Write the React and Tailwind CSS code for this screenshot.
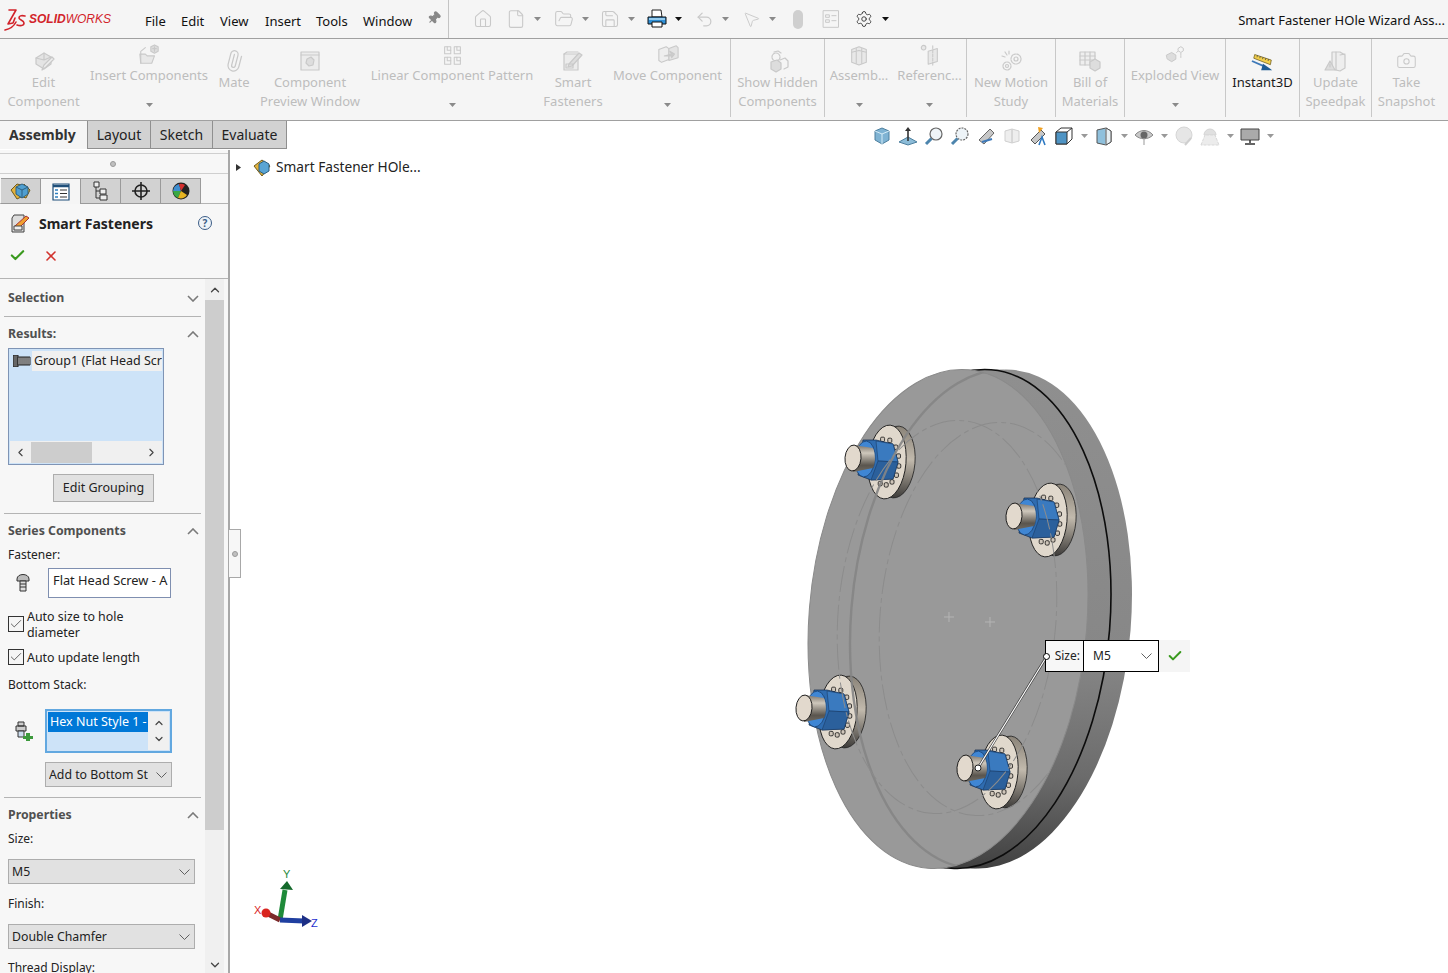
import React from "react";
import { House, File, FolderOpen, Save, Undo2, MousePointer2, Settings, Pin, Camera, Paperclip, ChevronDown, ChevronUp, ChevronLeft, ChevronRight, Check, X } from "lucide-react";

const G = "#c9c9c9";
const Ico = ({ children, s = 24, c = G }) => (
  <svg width={s} height={s} viewBox="0 0 24 24" fill="none" stroke={c} strokeWidth="1.2" strokeLinejoin="round" strokeLinecap="round">{children}</svg>
);
const Caret = ({ c = "#555" }) => (
  <svg width="7" height="4" viewBox="0 0 7 4"><path d="M0 0h7L3.5 4z" fill={c} /></svg>
);

const IEdit = () => <Ico><path d="M4 9l8-5 7 4v7l-7 5-8-5z" fill="#e4e4e4"/><path d="M12 4v7M4 9l8 2 7-3"/><path d="M10 21l2-5 8-8 2 2-8 8z" fill="#eee"/></Ico>;
const IInsert = () => <Ico s={22}><path d="M2 11h6l2 2h8l-3 8H3z" fill="#e8e8e8"/><path d="M3 21V8l5-4"/><path d="M14 3l4-2 4 2v5l-4 2-4-2z" fill="#ddd"/><path d="M18 3v5M16 5h4"/></Ico>;
const IPreview = () => <Ico s={24}><rect x="3" y="3" width="18" height="18" fill="#ececec"/><path d="M3 6h18"/><path d="M9 10l4-2 3 3-1 5-4 1-3-3z" fill="#ddd"/></Ico>;
const ILinear = () => <Ico s={21}><rect x="3" y="2" width="7" height="8" /><rect x="14" y="2" width="7" height="8"/><rect x="3" y="14" width="7" height="8"/><rect x="14" y="14" width="7" height="8"/><path d="M6 2v4h4M17 2v4h4M6 14v4h4M17 14v4h4"/></Ico>;
const ISmart = () => <Ico s={24}><path d="M3 5h14v16H3z" fill="#ececec"/><path d="M3 5l3-2h11"/><path d="M8 15l10-11 3 2-10 11-4 1z" fill="#ddd"/><path d="M5 15h7v4H5z"/></Ico>;
const IMove = () => <Ico s={22}><path d="M2 6l8-3 3 2v12l-8 3-3-2z" fill="#eee"/><path d="M13 5l8-3 2 2v11l-10 3z" fill="#e4e4e4"/><path d="M8 13l8-2-2-3 5 3-3 4v-2z" fill="#ccc"/></Ico>;
const IHidden = () => <Ico s={24}><circle cx="10" cy="8" r="4" strokeDasharray="2 1"/><path d="M5 13l6-2 4 3v6l-5 3-5-3z" fill="#ddd"/><path d="M14 11l5-2 3 3v6l-4 2"/><path d="M8 3l4-1 3 2"/></Ico>;
const IAssemb = () => <Ico s={22}><path d="M4 6l8-3 8 3v14l-8 3-8-3z" fill="#e8e8e8"/><path d="M9 5v16M15 5v16M4 9l8-2 8 2"/></Ico>;
const IRef = () => <Ico s={22}><circle cx="5" cy="4" r="2.5" fill="#e8e8e8"/><path d="M10 8l10-3v14l-10 3z" fill="#e8e8e8"/><path d="M15 2v21" strokeDasharray="3 1.5"/></Ico>;
const IMotion = () => <Ico s={24}><circle cx="8" cy="17" r="4" strokeDasharray="2 1"/><circle cx="17" cy="10" r="5" strokeDasharray="2 1"/><circle cx="17" cy="10" r="2"/><circle cx="8" cy="17" r="1.5"/><path d="M6 3l2 3M3 7l3 1M10 2v3"/></Ico>;
const IBom = () => <Ico s={24}><rect x="2" y="3" width="15" height="13" fill="#eee"/><path d="M2 7h15M2 11h15M7 3v13M12 3v13"/><path d="M12 13l5-3 5 3v6l-5 3-5-3z" fill="#ddd"/></Ico>;
const IExploded = () => <Ico s={20}><path d="M2 12l6-3 5 3v5l-5 3-5-3z" fill="#ddd"/><path d="M16 4l3-2 3 2v3l-3 2-3-2z"/><path d="M19 10v6M14 9l2-2" strokeDasharray="2 1"/></Ico>;
const IInstant = () => (
  <svg width="24" height="24" viewBox="0 0 26 26"><path d="M4 6l18 6-1 5L3 10z" fill="#f2cf4a" stroke="#6a5a20" strokeWidth=".8"/><path d="M7 7l-.5 2M10 8l-.5 2M13 9l-.5 2M16 10l-.5 2M19 11l-.5 2" stroke="#444" strokeWidth=".8"/><path d="M1 13l14 6" stroke="#3e79b8" strokeWidth="2"/><path d="M13 16l10 7H11z" fill="#1f5c94"/></svg>
);
const ISpeed = () => <Ico s={24}><path d="M8 3h8l5 3v13l-5 3-8-2z" fill="#eee"/><path d="M12 3v18M16 6l5-1"/><path d="M6 12l5 9H1z" fill="#ddd"/><path d="M6 15v3"/></Ico>;

const Item = ({ w, lines, I, caret, one, active }) => (
  <div className={`${w} shrink-0 h-[81px] flex flex-col items-center ${active ? "text-[#1a1a1a]" : "text-[#bdbdbd]"} whitespace-nowrap`}>
    {one ? (
      <>
        <div className="mt-[6px] h-[20px] flex items-center justify-center"><I /></div>
        <div className="mt-[1px] leading-[19px]">{lines[0]}</div>
        {caret && <div className="mt-[18px]"><Caret c="#8a8a8a" /></div>}
      </>
    ) : (
      <>
        <div className="mt-[9px] h-[25px] flex items-center justify-center"><I /></div>
        {lines.map((l) => <div key={l} className="leading-[19px]">{l}</div>)}
      </>
    )}
  </div>
);
const Sep = () => <div className="w-px h-[78px] bg-[#c8c8c8] shrink-0" />;

const Logo = () => (
  <div className="flex items-center w-[145px] pl-[4px] shrink-0">
    <svg width="24" height="24" viewBox="0 0 24 24" fill="none" stroke="#d2232a" strokeWidth="1.6" strokeLinecap="round" strokeLinejoin="round">
      <path d="M5 3h7l-8 14 5-1 2-5" />
      <path d="M1 23c5-1 9-4 11-8" />
      <path d="M21 9c-4-1-6 0-6 2s5 2 5 5-4 3-7 2" />
    </svg>
    <div className="ml-[1px] text-[12px] italic text-[#d2232a] leading-none font-['Liberation_Sans',sans-serif]"><span className="font-bold">SOLID</span><span>WORKS</span></div>
  </div>
);

const TbBtn = ({ children, caret, dark }) => (
  <>
    <div className="w-[28px] shrink-0 flex justify-center items-center">{children}</div>
    {caret && <div className="w-[19px] shrink-0 pl-[4px] flex items-center"><Caret c={dark ? "#111" : "#8a8a8a"} /></div>}
  </>
);

const Printer = () => (
  <svg width="20" height="20" viewBox="0 0 20 20"><path d="M5 1h9l1 7H5z" fill="#fff" stroke="#222"/><path d="M1 8h18v7H1z" fill="#2e8fd6" stroke="#111"/><path d="M2 10h16" stroke="#b9e0f7" strokeWidth="1.5"/><path d="M5 13h10v5H5z" fill="#fff" stroke="#111"/></svg>
);

const Chev = ({ up }) => (
  <svg width="12" height="7" viewBox="0 0 12 7" fill="none" stroke="#7a7a7a" strokeWidth="1.6">{up ? <path d="M1 6l5-5 5 5" /> : <path d="M1 1l5 5 5-5" />}</svg>
);
const SmallDown = () => (
  <svg width="11" height="6" viewBox="0 0 11 6" fill="none" stroke="#606060" strokeWidth="1"><path d="M.5.5l5 5 5-5" /></svg>
);

const HCube = () => <svg width="18" height="18" viewBox="0 0 18 18"><path d="M9 1l7 3v9l-7 4-7-4V4z" fill="#7fb3d3" stroke="#4d7f9e"/><path d="M2 4l7 3 7-3M9 7v10" stroke="#d5ecf7" fill="none"/></svg>;
const HNormal = () => <svg width="20" height="20" viewBox="0 0 20 20"><path d="M1 16l9-5 9 5-9 3z" fill="#8cbcd8" stroke="#4d7f9e"/><path d="M10 15V3" stroke="#333" strokeWidth="1.6"/><path d="M7 5l3-4 3 4z" fill="#333"/></svg>;
const HZoom = ({ dash }) => <svg width="20" height="20" viewBox="0 0 20 20" fill="none"><circle cx="12" cy="8" r="6" fill="#eef4f8" stroke="#666" strokeWidth="1.2" strokeDasharray={dash ? "2 1" : "0"}/><path d="M7.5 12.5L2 18" stroke="#4d85ad" strokeWidth="3"/></svg>;
const HPrev = () => <svg width="20" height="20" viewBox="0 0 20 20"><path d="M3 14L14 3l4 4L8 18z" fill="#c7c7c7" stroke="#666"/><path d="M6 16l10-3" stroke="#3e79b8" strokeWidth="2"/></svg>;
const HSect = () => <svg width="20" height="20" viewBox="0 0 20 20" fill="#eee" stroke="#d0d0d0"><path d="M3 5l7-2v14l-7-2zM10 3l7 2v10l-7 2z"/></svg>;
const HDyn = () => <svg width="20" height="20" viewBox="0 0 20 20"><path d="M3 14L13 4l4 4L7 18z" fill="#c7c7c7" stroke="#555"/><path d="M10 1l5 1-4 5z" fill="#f0a020"/><path d="M11 19l3-8 3 8" stroke="#2e79c2" strokeWidth="1.6" fill="none"/></svg>;
const HBox = () => <svg width="20" height="20" viewBox="0 0 20 20"><path d="M2 6l5-4h11v11l-5 5H2z" fill="#fff" stroke="#333"/><path d="M2 6h11v12H2z" fill="#4f94c4" stroke="#333"/><path d="M13 6l5-4" stroke="#333"/></svg>;
const HCyl = () => <svg width="20" height="20" viewBox="0 0 20 20"><path d="M3 4l9-2 5 3v11l-5 3-9-2z" fill="#8fc0dc" stroke="#555"/><path d="M12 2v17" stroke="#eee"/><path d="M12 2l5 3v11l-5 3z" fill="#e6eef2" stroke="#555"/></svg>;
const HEye = () => <svg width="20" height="20" viewBox="0 0 20 20"><path d="M1 9c5-6 13-6 18 0-5 5-13 5-18 0z" fill="#c8c8c8" stroke="#888"/><circle cx="10" cy="9" r="3.5" fill="#666"/><path d="M10 12v7" stroke="#999"/></svg>;
const HBall = () => <svg width="20" height="20" viewBox="0 0 20 20"><circle cx="10" cy="9" r="8" fill="#e6e6e6" stroke="#d6d6d6"/><path d="M11 19l6-7" stroke="#cfcfcf" strokeWidth="2"/></svg>;
const HScene = () => <svg width="22" height="20" viewBox="0 0 22 20"><path d="M5 9a6 6 0 0112 0z" fill="#e0e0e0" stroke="#d4d4d4"/><path d="M2 19l4-10h10l4 10z" fill="#ececec" stroke="#d8d8d8" strokeDasharray="3 1"/></svg>;
const HMon = () => <svg width="20" height="20" viewBox="0 0 20 20"><path d="M1 3h18v11H1z" fill="#aaa" stroke="#444"/><path d="M10 14v3M5 18h10" stroke="#333" strokeWidth="1.5"/></svg>;

const ht = [
  [HCube], [HNormal], [HZoom], [HZoom, true], [HPrev], [HSect], [HDyn],
];

const SectionHeader = ({ children, up, cls }) => (
  <div className={`flex items-center justify-between pl-[8px] pr-[6px] ${cls}`}>
    <div className="text-[12.3px] font-bold text-[#505050] leading-[18px]">{children}</div>
    <Chev up={up} />
  </div>
);
const Rule = ({ cls = "" }) => <div className={`h-px bg-[#b4b4b4] ml-[4px] w-[197px] ${cls}`} />;
const Label = ({ children, cls = "" }) => <div className={`pl-[8px] leading-[18px] text-[12px] text-[#222] ${cls}`}>{children}</div>;

const Box = ({ cls = "" }) => <div className={`w-[16px] h-[16px] border border-[#333] flex items-center justify-center bg-[#f5f5f5] shrink-0 ${cls}`}><Check size={14} strokeWidth={1.4} color="#444" /></div>;

const Select = ({ children, cls }) => (
  <div className={`${cls} h-[25px] bg-[#e1e1e1] border border-[#adadad] flex items-center justify-between pl-[3px] pr-[4px] text-[12.3px] text-[#222] overflow-hidden whitespace-nowrap`}>
    <span className="overflow-hidden pt-[2px]">{children}</span><span className="shrink-0 ml-[3px]"><SmallDown /></span>
  </div>
);

const Tab = ({ children, active }) => (
  <div className={`w-[40px] h-[26px] flex items-center justify-center border-[#9a9a9a] border-t border-r ${active ? "bg-[#f5f5f5]" : "bg-[#d2d2d2] border-b"}`}>{children}</div>
);

const teeth = [-100, -70, -40, -15, 10, 35, 60, 85, 110].map((a) => {
  const r = (a * Math.PI) / 180;
  return [-6 + 14 * Math.cos(r), 23 * Math.sin(r)];
});

const Fastener = ({ x, y }) => (
  <g transform={`translate(${x} ${y})`}>
    <ellipse cx="5" cy="0" rx="19" ry="36" transform="rotate(5 5 0)" fill="url(#wband)" stroke="#222" strokeWidth=".8" />
    <ellipse cx="-4" cy="0" rx="19" ry="37" transform="rotate(5 -4 0)" fill="#e0d8cc" stroke="#1a1a1a" strokeWidth=".9" />
    {teeth.map(([a, b], i) => <rect key={i} x={a - 2} y={b - 2.2} width="4" height="4.4" rx="1.2" fill="#cfc6ba" stroke="#111" strokeWidth=".8" />)}
    <path d="M-28-22h13l17 4 5 18-5 17-22 1-13-5z" fill="#2f6cb0" stroke="#13294a" strokeWidth=".7" />
    <path d="M-15-21L2-18 7 0l-20-1z" fill="#3a7abf" stroke="#1b3c66" strokeWidth=".6" />
    <path d="M-13-1L7 0 2 17l-22 1z" fill="#2b609c" stroke="#1b3c66" strokeWidth=".6" />
    <ellipse cx="-26" cy="-3" rx="10" ry="18" transform="rotate(5 -26 -3)" fill="#3f86d4" stroke="#173a66" strokeWidth=".7" />
    <path d="M-38-17l20 3c2 4 3 14 0 20l-20 4z" fill="url(#stud)" />
    <ellipse cx="-38" cy="-4" rx="8" ry="13" transform="rotate(5 -38 -4)" fill="#e2d9cd" stroke="#111" strokeWidth=".9" />
  </g>
);

const Model = () => {
  const rot = (cx, cy) => `rotate(4.6 ${cx} ${cy})`;
  return (
    <svg className="absolute left-0 top-0" width="1218" height="823" viewBox="230 150 1218 823">
      <defs>
        <linearGradient id="band" gradientUnits="userSpaceOnUse" x1="0" y1="370" x2="0" y2="870">
          <stop offset="0" stopColor="#8f8f8f" /><stop offset=".55" stopColor="#878787" /><stop offset=".8" stopColor="#6b6b6b" /><stop offset="1" stopColor="#3f3f3f" />
        </linearGradient>
        <linearGradient id="wband" x1="0" y1="0" x2="0" y2="1">
          <stop offset="0" stopColor="#8a8378" /><stop offset=".45" stopColor="#c2baad" /><stop offset="1" stopColor="#3c3a38" />
        </linearGradient>
        <linearGradient id="stud" x1="0" y1="0" x2="0" y2="1">
          <stop offset="0" stopColor="#7a736a" /><stop offset=".3" stopColor="#cfc8bc" /><stop offset=".75" stopColor="#5a554e" /><stop offset="1" stopColor="#6f6a62" />
        </linearGradient>
        <clipPath id="face"><ellipse cx="947" cy="619" rx="139" ry="250" transform={rot(947, 619)} /></clipPath>
      </defs>
      {[45, 36, 24, 12].map((d) => (
        <ellipse key={d} cx={947 + d} cy="619" rx="139" ry="250" transform={rot(947 + d, 619)} fill="url(#band)" />
      ))}
      <ellipse cx="971" cy="619" rx="139" ry="250" transform={rot(971, 619)} fill="none" stroke="#0c0c0c" strokeWidth="1.6" />
      <ellipse cx="948" cy="619" rx="139" ry="250" transform={rot(948, 619)} fill="#999999" stroke="#8a8a8a" strokeWidth="1" />
      <path d="M944 617h10M949 612v10M985 622h10M990 617v10" stroke="#b4b4b4" strokeWidth="1" />
      <Fastener x={891} y={462} />
      <Fastener x={1052} y={520} />
      <Fastener x={842} y={712} />
      <Fastener x={1003} y={772} />
      <g clipPath="url(#face)" fill="none">
        <ellipse cx="990" cy="619" rx="139" ry="250" transform={rot(990, 619)} stroke="#858585" strokeWidth="2.4" opacity=".9" />
        <ellipse cx="947" cy="617" rx="109" ry="197" transform={rot(947, 617)} stroke="#8c8c8c" strokeWidth="1" strokeDasharray="26 4 5 4" />
        <ellipse cx="989" cy="619" rx="109" ry="197" transform={rot(989, 619)} stroke="#8c8c8c" strokeWidth="1" strokeDasharray="26 4 5 4" />
      </g>
      <path d="M1047 656L978 768" stroke="#333" strokeWidth="2.4" />
      <path d="M1047 656L978 768" stroke="#fff" strokeWidth="1.2" />
      <circle cx="978" cy="768" r="3" fill="#fff" stroke="#222" />
      <g>
        <path d="M280 920l5-30" stroke="#1f8a3a" strokeWidth="5" />
        <path d="M280 889l7-8 6 9z" fill="#14692b" />
        <path d="M280 920l-12-6" stroke="#7c2a2a" strokeWidth="5" />
        <circle cx="266" cy="913" r="4.5" fill="#d9241f" />
        <path d="M280 920l24 1" stroke="#1f3fa0" strokeWidth="5" />
        <path d="M302 915l10 6-10 6z" fill="#1d2f86" />
        <text x="283" y="878" fontSize="11" fill="#1f8a3a" fontFamily="Liberation Sans, sans-serif">Y</text>
        <text x="254" y="914" fontSize="11" fill="#d9241f" fontFamily="Liberation Sans, sans-serif">X</text>
        <text x="311" y="927" fontSize="11" fill="#1f2fd0" fontFamily="Liberation Sans, sans-serif">Z</text>
      </g>
    </svg>
  );
};

export default function App() {
  return (
    <div className="w-[1448px] h-[973px] overflow-hidden bg-white flex flex-col font-['Noto_Sans',sans-serif] text-[13px]">
      <div className="h-[39px] shrink-0 bg-[#f5f5f5] border-b border-[#a0a0a0] flex items-center">
        <Logo />
        <div className="flex text-[#111] pt-[5px] w-[282px] shrink-0">
          <span className="w-[36px]">File</span><span className="w-[39px]">Edit</span><span className="w-[45px]">View</span><span className="w-[51px]">Insert</span><span className="w-[47px]">Tools</span><span className="w-[64px]">Window</span>
        </div>
        <div className="w-[21px] shrink-0 flex pb-[2px]"><Pin size={14} color="#888" fill="#888" className="rotate-45" /></div>
        <div className="w-px h-[38px] bg-[#c4c4c4] shrink-0" />
        <div className="flex items-center ml-[20px]">
          <TbBtn><House size={20} color={G} strokeWidth={1.3} /></TbBtn>
          <div className="w-[5px]" />
          <TbBtn caret><File size={20} color={G} strokeWidth={1.3} /></TbBtn>
          <div className="w-[1px]" />
          <TbBtn caret><FolderOpen size={20} color={G} strokeWidth={1.3} /></TbBtn>
          <div className="-ml-[1px]" />
          <TbBtn caret><Save size={20} color={G} strokeWidth={1.3} /></TbBtn>
          <TbBtn caret dark><Printer /></TbBtn>
          <TbBtn caret><Undo2 size={19} color={G} strokeWidth={1.6} /></TbBtn>
          <TbBtn caret><MousePointer2 size={19} color={G} strokeWidth={1.2} /></TbBtn>
          <TbBtn><div className="w-[10px] h-[19px] rounded-[5px] bg-[#cfcfcf]" /></TbBtn>
          <div className="w-[5px]" />
          <TbBtn><Ico s={20}><rect x="3" y="2" width="18" height="20" /><path d="M6 7h4v3H6zM6 13h4v3H6zM13 8h5M13 14h5" /></Ico></TbBtn>
          <div className="w-[5px]" />
          <TbBtn caret dark><Settings size={18} color="#333" strokeWidth={1.2} /></TbBtn>
        </div>
        <div className="ml-auto pr-[3px] text-[#111] whitespace-nowrap pt-[3px]">Smart Fastener HOle Wizard Ass...</div>
      </div>

      <div className="h-[82px] shrink-0 bg-[#f5f5f5] border-b border-[#a0a0a0] flex items-start overflow-hidden">
        <Item w="w-[87px]" lines={["Edit", "Component"]} I={IEdit} />
        <Item w="w-[124px]" one caret lines={["Insert Components"]} I={IInsert} />
        <Item w="w-[46px]" lines={["Mate", ""]} I={() => <Paperclip size={22} color={G} strokeWidth={1.4} className="rotate-[-30deg]" />} />
        <Item w="w-[106px]" lines={["Component", "Preview Window"]} I={IPreview} />
        <Item w="w-[178px]" one caret lines={["Linear Component Pattern"]} I={ILinear} />
        <Item w="w-[64px]" lines={["Smart", "Fasteners"]} I={ISmart} />
        <Item w="w-[125px]" one caret lines={["Move Component"]} I={IMove} />
        <Sep />
        <Item w="w-[93px]" lines={["Show Hidden", "Components"]} I={IHidden} />
        <Sep />
        <Item w="w-[68px]" one caret lines={["Assemb..."]} I={IAssemb} />
        <Item w="w-[73px]" one caret lines={["Referenc..."]} I={IRef} />
        <Sep />
        <Item w="w-[88px]" lines={["New Motion", "Study"]} I={IMotion} />
        <Sep />
        <Item w="w-[68px]" lines={["Bill of", "Materials"]} I={IBom} />
        <Sep />
        <Item w="w-[100px]" one caret lines={["Exploded View"]} I={IExploded} />
        <Sep />
        <Item w="w-[73px]" active lines={["Instant3D"]} I={IInstant} />
        <Sep />
        <Item w="w-[71px]" lines={["Update", "Speedpak"]} I={ISpeed} />
        <Sep />
        <Item w="w-[69px]" lines={["Take", "Snapshot"]} I={() => <Camera size={21} color={G} strokeWidth={1.2} />} />
      </div>

      <div className="h-[29px] shrink-0 flex items-start bg-white">
        <div className="flex h-[28px] text-[14px] text-[#222]">
          <div className="w-[87px] bg-[#f5f5f5] flex items-center pl-[9px] pb-[2px] font-bold text-[#333]">Assembly</div>
          <div className="w-[64px] bg-[#d2d2d2] border-x border-b border-[#8f8f8f] flex items-center justify-center">Layout</div>
          <div className="w-[62px] bg-[#d2d2d2] border-r border-b border-[#8f8f8f] flex items-center justify-center">Sketch</div>
          <div className="w-[74px] bg-[#d2d2d2] border-r border-b border-[#8f8f8f] flex items-center justify-center">Evaluate</div>
        </div>
        <div className="ml-[582px] mt-[5px] flex items-center h-[20px]">
          {ht.map(([I, d], i) => <div key={i} className="w-[26px] flex justify-center">{d ? <HZoom dash /> : <I />}</div>)}
          <div className="w-[26px] flex justify-center"><HBox /></div>
          <div className="w-[14px] flex justify-center"><Caret c="#999" /></div>
          <div className="w-[26px] flex justify-center"><HCyl /></div>
          <div className="w-[14px] flex justify-center"><Caret c="#999" /></div>
          <div className="w-[26px] flex justify-center"><HEye /></div>
          <div className="w-[14px] flex justify-center"><Caret c="#999" /></div>
          <div className="w-[26px] flex justify-center"><HBall /></div>
          <div className="w-[26px] flex justify-center"><HScene /></div>
          <div className="w-[14px] flex justify-center"><Caret c="#999" /></div>
          <div className="w-[26px] flex justify-center"><HMon /></div>
          <div className="w-[14px] flex justify-center"><Caret c="#999" /></div>
        </div>
      </div>

      <div className="flex-1 flex min-h-0">
        <aside className="w-[230px] shrink-0 bg-[#f7f7f7] border-r-2 border-[#a8a8a8] flex flex-col overflow-hidden">
          <div className="mt-[3px] h-[21px] border-y border-[#cfcfcf] w-[228px] flex items-center justify-center shrink-0">
            <div className="w-[6px] h-[6px] rounded-full bg-[#c0c0c0] border border-[#9a9a9a] -ml-[2px]" />
          </div>
          <div className="flex pl-[1px] mt-[4px] border-b border-[#b4b4b4] h-[26px] shrink-0">
            <Tab><svg width="22" height="20" viewBox="0 0 22 20"><path d="M1 9l6-6 4 1v12l-4 2z" fill="#e3b23c" stroke="#6d5a1e"/><path d="M14 3l6 6-4 8-3-1z" fill="#e3b23c" stroke="#6d5a1e"/><path d="M6 6l6-3 6 3v7l-6 4-6-4z" fill="#4f9fd0" stroke="#2d5f80"/><path d="M6 6l6 3 6-3M12 9v8" stroke="#2d5f80" fill="none"/></svg></Tab>
            <Tab active><svg width="18" height="18" viewBox="0 0 18 18"><path d="M1 1h16v16H1z" fill="#fff" stroke="#1f4f7a" strokeWidth="1.2"/><path d="M1 3h16" stroke="#1f4f7a" strokeWidth="2.5"/><path d="M3 7h3M3 10.5h3M3 14h3" stroke="#2d7fc0" strokeWidth="1.6"/><path d="M8 7h7M8 10.5h7M8 14h7" stroke="#333"/></svg></Tab>
            <Tab><svg width="18" height="20" viewBox="0 0 18 20" fill="#eee" stroke="#333"><path d="M2 1h5v5H2zM8 8h6v5H8zM8 14h7v5H8z"/><path d="M4 6v11h4M4 10h4" fill="none"/></svg></Tab>
            <Tab><svg width="18" height="18" viewBox="0 0 18 18" fill="none" stroke="#222" strokeWidth="1.6"><circle cx="9" cy="9" r="6"/><path d="M9 0v18M0 9h18"/></svg></Tab>
            <Tab><svg width="18" height="18" viewBox="0 0 18 18"><circle cx="9" cy="9" r="8.5" fill="#222"/><path d="M1 9a8 8 0 016-7l2 7z" fill="#3f8ed0"/><path d="M1 9h8l-3 7a8 8 0 01-5-7z" fill="#3aa845"/><path d="M6 16l3-7 6 4a8 8 0 01-9 3z" fill="#e6b422"/><path d="M7 2a8 8 0 016 1L9 9z" fill="#d32f2f"/></svg></Tab>
          </div>

          <div className="h-[36px] flex items-center pl-[11px] pr-[16px] mt-[1px] shrink-0">
            <svg width="20" height="19" viewBox="0 0 20 19"><path d="M1 4l2-3h10v17H1z" fill="#ddd" stroke="#444"/><path d="M4 12l11-10 3 2L8 14l-4 1z" fill="#f0a030" stroke="#a33"/><path d="M3 12h8v4H3z" fill="#eee" stroke="#444"/></svg>
            <div className="ml-[8px] text-[14px] font-bold text-[#222] flex-1">Smart Fasteners</div>
            <div className="w-[14px] h-[14px] rounded-full border border-[#3b5c86] text-[#3b5c86] text-[10px] font-bold flex items-center justify-center leading-none bg-[#eef3f8]">?</div>
          </div>
          <div className="h-[29px] flex items-center pl-[9px] gap-[17px] shrink-0">
            <Check size={17} color="#3a9a1e" strokeWidth={3} />
            <X size={16} color="#d2322d" strokeWidth={2.4} />
          </div>
          <div className="h-px bg-[#b4b4b4] w-[228px] mt-[8px] shrink-0" />

          <div className="flex flex-1 min-h-0">
            <div className="w-[205px] shrink-0">
              <SectionHeader cls="mt-[10px]">Selection</SectionHeader>
              <Rule cls="mt-[9px]" />
              <SectionHeader up cls="mt-[8px]">Results:</SectionHeader>
              <div className="ml-[8px] mt-[5px] w-[156px] h-[117px] border border-[#7f94b5] bg-[#cde3f8] flex flex-col p-[1px]">
                <div className="flex items-center h-[20px] mt-px">
                  <svg className="ml-[3px] shrink-0" width="18" height="12" viewBox="0 0 18 12"><path d="M0 0h5v12H0z" fill="#666" stroke="#222"/><path d="M5 2h12v8H5z" fill="#ddd" stroke="#222"/><path d="M7 2v8M9 2v8M11 2v8M13 2v8M15 2v8" stroke="#222"/></svg>
                  <div className="ml-[1px] flex-1 bg-[#f0f0f0] h-[20px] text-[12.5px] leading-[20px] pl-[2px] whitespace-nowrap overflow-hidden text-[#222]">Group1 (Flat Head Scr</div>
                </div>
                <div className="flex-1" />
                <div className="h-[22px] bg-[#f0f0f0] flex items-center justify-between px-[4px]">
                  <ChevronLeft size={13} color="#444" strokeWidth={2} />
                  <div className="w-[61px] h-[21px] bg-[#cdcdcd] mr-auto ml-[4px]" />
                  <ChevronRight size={13} color="#444" strokeWidth={2} />
                </div>
              </div>
              <div className="ml-[53px] mt-[9px] w-[101px] h-[28px] bg-[#e1e1e1] border border-[#adadad] flex items-center justify-center pt-[1px] text-[12.5px] text-[#222]">Edit Grouping</div>
              <Rule cls="mt-[11px]" />
              <SectionHeader up cls="mt-[8px]">Series Components</SectionHeader>
              <Label cls="mt-[6px]">Fastener:</Label>
              <div className="flex items-center mt-[4px] h-[30px]">
                <svg className="ml-[16px]" width="14" height="18" viewBox="0 0 14 18"><path d="M1 5c0-6 12-6 12 0v2H1z" fill="#bbb" stroke="#333"/><path d="M4 7h6v10H4z" fill="#ddd" stroke="#333"/><path d="M4 10h6M4 13h6" stroke="#333"/></svg>
                <div className="ml-[18px] w-[123px] h-[30px] bg-white border border-[#7f8fb0] pl-[4px] text-[12.8px] leading-[23px] whitespace-nowrap overflow-hidden text-[#222]">Flat Head Screw - A</div>
              </div>
              <div className="flex items-start mt-[11px] pl-[8px]">
                <Box cls="mt-[7px]" />
                <div className="ml-[3px] text-[12.4px] leading-[16px] text-[#222]">Auto size to hole<br />diameter</div>
              </div>
              <div className="flex items-start mt-[8px] pl-[8px]">
                <Box />
                <div className="ml-[3px] pt-[1px] text-[12.4px] leading-[16px] text-[#222]">Auto update length</div>
              </div>
              <Label cls="mt-[10px]">Bottom Stack:</Label>
              <div className="flex items-center mt-[15px]">
                <svg className="ml-[13px]" width="20" height="20" viewBox="0 0 20 20"><path d="M5 1h6v4H5zM3 5h10v5H3z" fill="#ccc" stroke="#333"/><path d="M5 10h6v6H5z" fill="#cde" stroke="#333"/><path d="M13 12h4v3h3v3h-3v2h-4v-2h-3v-3h3z" fill="#3c9a3c"/></svg>
                <div className="ml-[12px] w-[127px] h-[44px] border-2 border-[#62a8e0] bg-[#cde3f8] flex">
                  <div className="flex-1 min-w-0">
                    <div className="mt-px ml-px h-[20px] bg-[#0078d7] text-white text-[12.5px] leading-[20px] pl-[2px] whitespace-nowrap overflow-hidden">Hex Nut Style 1 -</div>
                  </div>
                  <div className="w-[21px] bg-[#f0f0f0] flex flex-col items-center justify-between py-[5px] mr-px my-px">
                    <ChevronUp size={12} color="#444" strokeWidth={2.4} />
                    <ChevronDown size={12} color="#444" strokeWidth={2.4} />
                  </div>
                </div>
              </div>
              <Select cls="ml-[45px] mt-[9px] w-[127px]">Add to Bottom St</Select>
              <Rule cls="mt-[10px]" />
              <SectionHeader up cls="mt-[8px]">Properties</SectionHeader>
              <Label cls="mt-[6px]">Size:</Label>
              <Select cls="ml-[8px] mt-[11px] w-[187px]">M5</Select>
              <Label cls="mt-[11px]">Finish:</Label>
              <Select cls="ml-[8px] mt-[11px] w-[187px]">Double Chamfer</Select>
              <Label cls="mt-[10px]">Thread Display:</Label>
            </div>
            <div className="w-[19px] shrink-0 bg-[#f0f0f0] flex flex-col items-center">
              <div className="h-[21px] flex items-center justify-center shrink-0"><ChevronUp size={14} color="#444" strokeWidth={2.2} /></div>
              <div className="w-full h-[530px] bg-[#cdcdcd] shrink-0" />
              <div className="mt-auto h-[16px] flex items-center justify-center shrink-0"><ChevronDown size={14} color="#444" strokeWidth={2.2} /></div>
            </div>
          </div>
        </aside>

        <main className="flex-1 relative min-w-0 bg-white">
          <Model />
          <div className="absolute -left-[1px] top-[379px] w-[12px] h-[49px] bg-[#f7f7f7] border border-l-0 border-[#a8a8a8] flex items-center justify-center">
            <div className="w-[6px] h-[6px] rounded-full bg-[#c0c0c0] border border-[#9a9a9a]" />
          </div>
          <div className="relative flex items-center h-[35px] pl-[6px]">
            <svg width="5" height="7" viewBox="0 0 5 7"><path d="M0 0l5 3.5L0 7z" fill="#333" /></svg>
            <svg className="ml-[11px]" width="20" height="20" viewBox="0 0 20 20"><path d="M2 8l8-6 8 6-8 10z" fill="#e3b23c" stroke="#6d5a1e"/><path d="M7 6l5-3 5 3v7l-5 3-5-3z" fill="#5aa5d4" stroke="#2d5f80"/></svg>
            <span className="ml-[4px] text-[13.7px] text-[#222] whitespace-nowrap">Smart Fastener HOle...</span>
          </div>
          <div className="absolute left-[815px] top-[490px] flex items-stretch h-[32px]">
            <div className="relative w-[114px] bg-white border border-black flex items-stretch text-[12px] text-[#222]">
              <div className="w-[38px] border-r border-black bg-[#f7f7f7] flex items-center justify-end pr-[3px]">Size:</div>
              <div className="flex-1 flex items-center justify-between pl-[9px] pr-[6px]"><span>M5</span><SmallDown /></div>
              <span className="absolute -left-[3px] top-[12px] w-[7px] h-[7px] rounded-full border border-black bg-white" />
            </div>
            <div className="w-[31px] bg-[#f5f5f5] flex items-center justify-center"><Check size={16} color="#3a9a1e" strokeWidth={3} /></div>
          </div>
        </main>
      </div>
    </div>
  );
}
